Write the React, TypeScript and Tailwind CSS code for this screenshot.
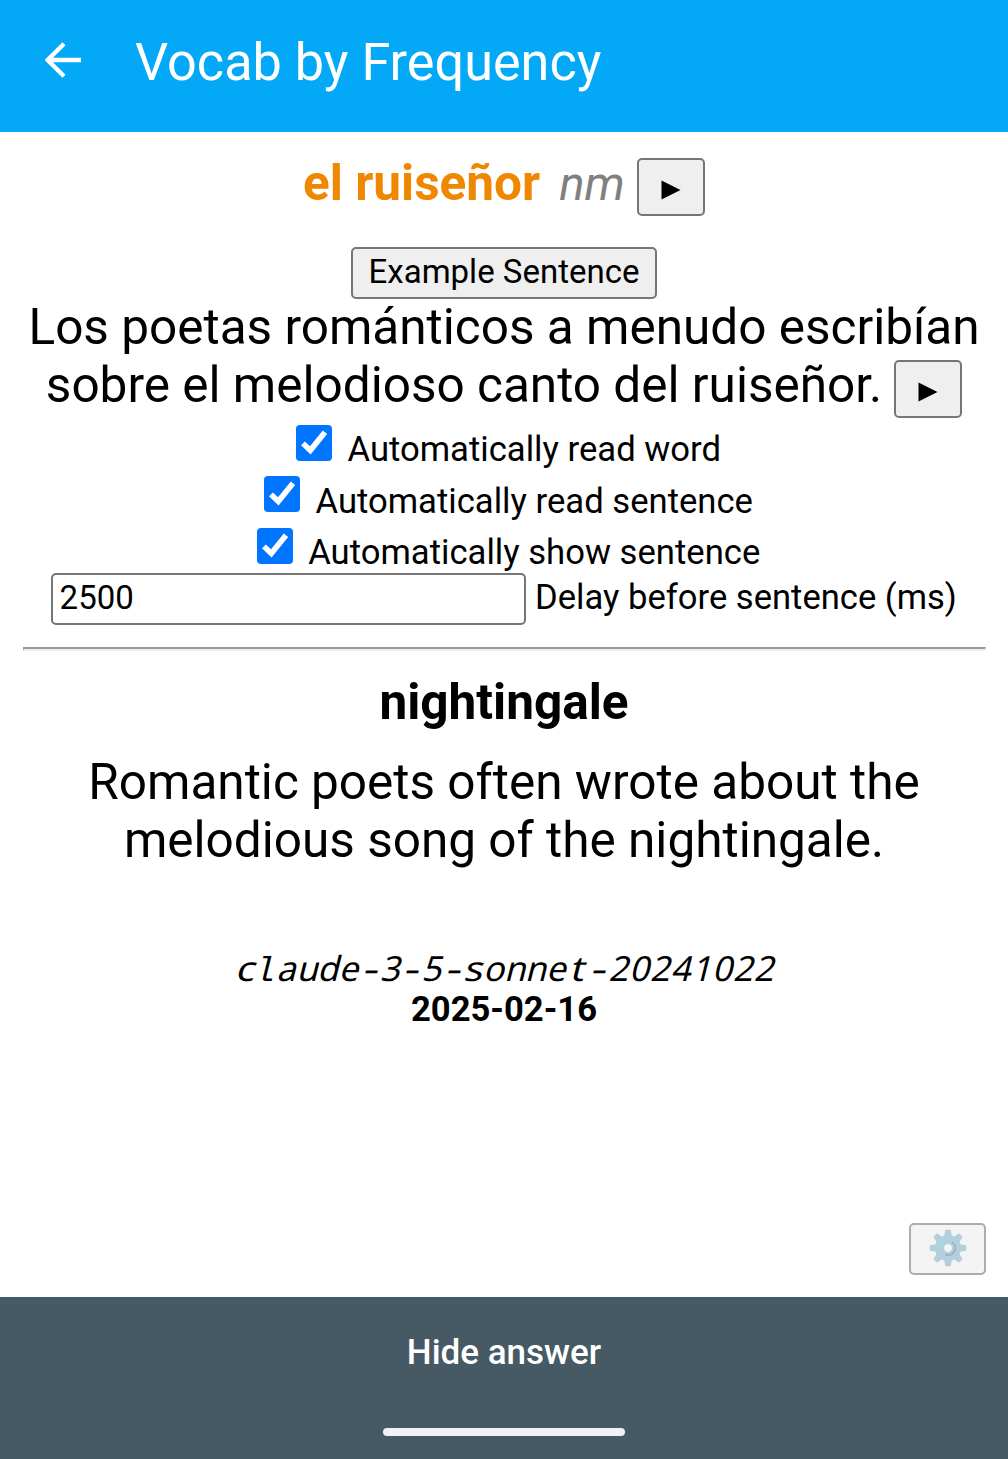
import React from "react";

const MODEL = "claude-3-5-sonnet-20241022";

function PlayButton({ className = "" }: { className?: string }) {
  return (
    <button
      aria-label="Play"
      className={`flex h-[58px] w-[68px] shrink-0 items-center justify-center rounded-[5px] border-2 border-[#767676] bg-[#efefef] ${className}`}
    >
      <svg width="20" height="20" viewBox="0 0 20 20" className="mt-[5px]">
        <path d="M0.5 0.5 19.5 10 0.5 19.5Z" fill="#000" />
      </svg>
    </button>
  );
}

function Check({ label, className = "" }: { label: string; className?: string }) {
  return (
    <label className={`flex items-start justify-center pl-[9px] ${className}`}>
      <svg width="36" height="36" viewBox="0 0 36 36" className="shrink-0">
        <rect width="36" height="36" rx="4" fill="#0075ff" />
        <path d="M5 20.3 8.9 16.4 14 21.3 26.8 5.4 31.2 8.9 14.6 29.6Z" fill="#fff" />
      </svg>
      <span className="mt-[4px] ml-[15.5px] text-[34.65px] leading-[40px] whitespace-nowrap">{label}</span>
    </label>
  );
}

function Gear() {
  const teeth = [0, 45, 90, 135, 180, 225, 270, 315];
  return (
    <svg width="38" height="38" viewBox="0 0 38 38">
      <g fill="#b4cfdb">
        {teeth.map((a) => (
          <path key={a} d="M15 8 16.3 1.2Q16.5 0.7 17 0.7H21Q21.5 0.7 21.7 1.2L23 8Z" transform={`rotate(${a} 19 19)`} />
        ))}
        <path fillRule="evenodd" d="M19 6a13 13 0 1 0 0 26a13 13 0 1 0 0-26ZM19 15.3a3.7 3.7 0 1 1 0 7.4a3.7 3.7 0 1 1 0-7.4Z" />
      </g>
      <path d="M8.5 19.5A10.8 10.8 0 0 1 19.5 8.2" fill="none" stroke="#a2dbe5" strokeWidth="1.8" strokeLinecap="round" />
      <path d="M13.5 18A6 6 0 0 1 19.5 12.9" fill="none" stroke="#a2dbe5" strokeWidth="1.5" strokeLinecap="round" />
      <path d="M23.5 13.5A7 7 0 0 1 17 25.7" fill="none" stroke="#87b3c0" strokeWidth="1.5" strokeLinecap="round" />
      <circle cx="19" cy="19" r="3.8" fill="#f4f4f4" />
    </svg>
  );
}

function monoClass(ch: string) {
  if (ch === "-") return "inline-block w-[20.78px] scale-x-125 text-center font-['Liberation_Mono',monospace]";
  if (ch === "l") return "inline-block w-[20.78px] -translate-x-[2px] text-center font-['Liberation_Mono',monospace]";
  if (ch === "c" || ch === "s" || ch === "t") return "inline-block w-[20.78px] scale-x-115 text-center";
  return "inline-block w-[20.78px] text-center";
}

export default function App() {
  return (
    <div className="flex h-[1459px] w-[1008px] flex-col overflow-hidden bg-white font-['Roboto',sans-serif] text-black">
      <header className="flex h-[132px] shrink-0 items-start bg-[#03a9f7] text-white">
        <svg width="36" height="36" viewBox="0 0 36 36" className="mt-[42px] ml-[45px] shrink-0">
          <path d="M36 18H3M19 1.7 2.7 18 19 34.3" fill="none" stroke="#fff" strokeWidth="4.4" />
        </svg>
        <h1 className="mt-[32px] ml-[54px] text-[52.2px] leading-[61px] whitespace-nowrap">Vocab by Frequency</h1>
      </header>

      <main className="flex h-[1165px] shrink-0 flex-col px-[23px] text-center">
        <div className="mt-[22px] flex h-[62px] items-start justify-center text-[49.5px] leading-[58px] whitespace-nowrap">
          <b className="font-bold text-[#f08700]">el ruiseñor</b>
          <i className="ml-[19px] pt-px text-[47.4px] leading-[58px] text-[#808080]">nm</i>
          <PlayButton className="mt-[4px] ml-[12px]" />
        </div>

        <button className="mt-[31px] h-[52px] w-[306px] shrink-0 self-center rounded-[5px] border-2 border-[#767676] bg-[#efefef] pb-[3px] text-[33px] leading-[40px] whitespace-nowrap">
          Example Sentence
        </button>

        <div className="-mx-[23px] -mt-px text-[49.5px] leading-[58px] whitespace-nowrap">
          <p>Los poetas románticos a menudo escribían</p>
          <div className="flex items-start justify-center">
            <span>sobre el melodioso canto del ruiseñor.</span>
            <PlayButton className="mt-[4px] ml-[12px]" />
          </div>
        </div>

        <Check label="Automatically read word" className="mt-[7px] h-[51px]" />
        <Check label="Automatically read sentence" className="h-[52px] [&>span]:mt-[5px]" />
        <Check label="Automatically show sentence" className="h-[45px]" />

        <div className="flex h-[52px] items-start justify-center">
          <input
            defaultValue="2500"
            className="h-[52px] w-[475px] shrink-0 rounded-[5px] border-2 border-[#767676] bg-white px-[6.5px] pb-[3px] text-[33px] leading-[40px]"
          />
          <span className="mt-[4px] ml-[9px] text-[34.6px] leading-[40px] whitespace-nowrap">Delay before sentence (ms)</span>
        </div>

        <hr className="-mr-px mt-[22px] h-[4px] shrink-0 border-t-2 border-r border-b-2 border-l border-t-[#9a9a9a] border-r-[#eeeeee] border-b-[#eeeeee] border-l-[#9a9a9a]" />

        <p className="mt-[22px] text-[49.5px] leading-[58px] font-bold">nightingale</p>
        <div className="mt-[22px] text-[49.5px] leading-[58px] whitespace-nowrap">
          <p>Romantic poets often wrote about the</p>
          <p>melodious song of the nightingale.</p>
        </div>

        <p className="mt-[79px] h-[41px] -skew-x-[14deg] pl-[6px] font-['Noto_Sans',sans-serif] text-[34.6px] leading-[40px] whitespace-nowrap">
          {MODEL.split("").map((ch, i) => (
            <span key={i} className={monoClass(ch)}>
              {ch}
            </span>
          ))}
        </p>
        <p className="text-[34.6px] leading-[40px] font-bold">2025-02-16</p>

        <button
          aria-label="Settings"
          className="-mr-px mt-auto mb-[22px] flex h-[52px] w-[77px] shrink-0 items-start justify-center self-end rounded-[5px] border-2 border-[#adadad] bg-[#f4f4f4] pt-[4px]"
        >
          <Gear />
        </button>
      </main>

      <footer className="flex h-[162px] shrink-0 flex-col items-center bg-[#455a64]">
        <span className="mt-[36px] text-[35px] leading-[40px] font-medium text-white">Hide answer</span>
        <div className="mt-[55px] h-[8px] w-[242px] rounded-full bg-[#f2f1f4]" />
      </footer>
    </div>
  );
}
